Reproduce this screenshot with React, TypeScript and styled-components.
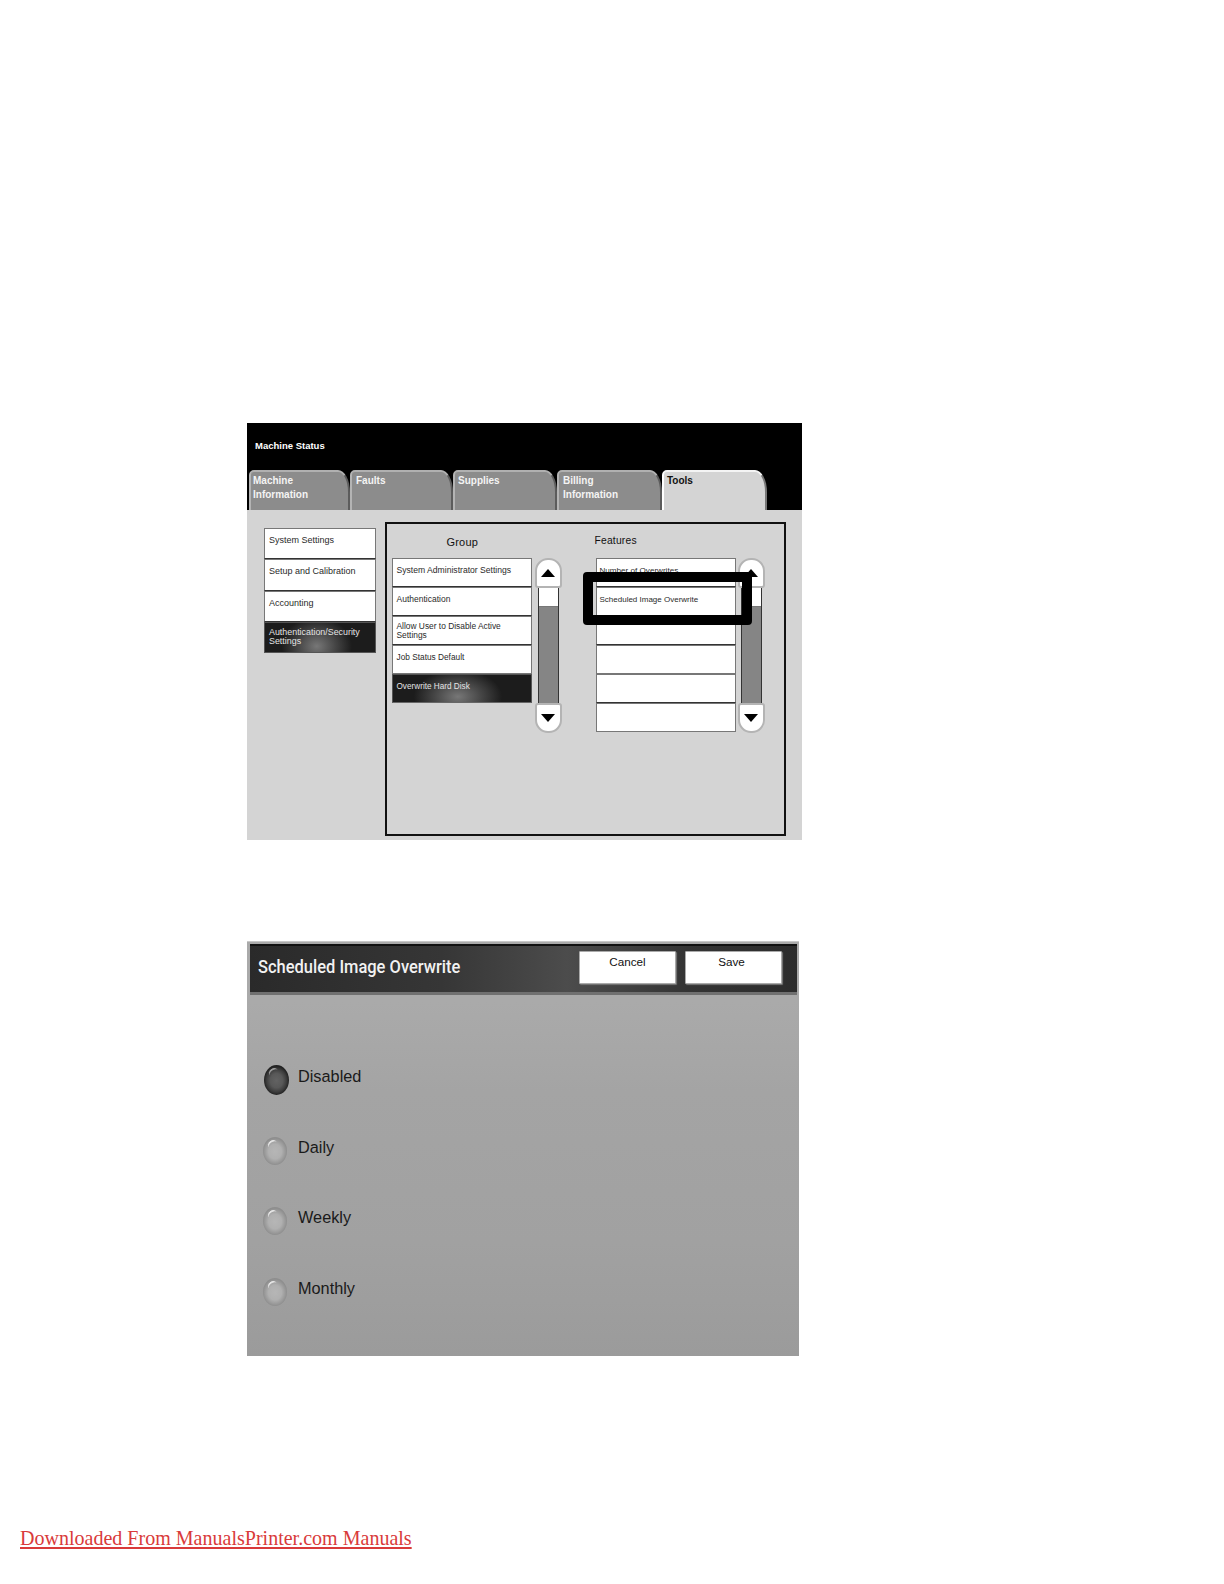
import React from 'react';
import styled, { createGlobalStyle } from 'styled-components';

const GlobalStyle = createGlobalStyle`
  html, body { margin: 0; padding: 0; background: #fff; }
  body { font-family: "Liberation Sans", Arial, sans-serif; }
`;

const Page = styled.div`
  width: 1224px;
  height: 1584px;
  box-sizing: border-box;
  padding: 423px 0 0 247px;
  display: flex;
  flex-direction: column;
  overflow: hidden;
`;

const StatusScreen = styled.section`
  width: 555px;
  height: 417px;
  background: #d4d4d4;
  display: flex;
  flex-direction: column;
`;

const BlackHeader = styled.header`
  height: 87px;
  box-sizing: border-box;
  background: #000;
  padding: 0 0 0 2px;
  display: flex;
  flex-direction: column;
  justify-content: space-between;
`;

const ScreenTitle = styled.h1`
  margin: 17px 0 0 6px;
  font-size: 9.5px;
  line-height: 12px;
  font-weight: 700;
  color: #fff;
`;

const TabRow = styled.nav`
  display: flex;
  align-items: flex-end;
`;

const Tab = styled.div<{ $active?: boolean; $w: number; $pad: number }>`
  width: ${p => p.$w}px;
  height: 40px;
  box-sizing: border-box;
  padding: 2px 0 0 ${p => p.$pad}px;
  background: ${p => (p.$active ? '#d4d4d4' : '#8c8c8c')};
  border-top: 2px solid ${p => (p.$active ? '#f4f4f4' : '#b0b0b0')};
  border-right: 2px solid ${p => (p.$active ? '#777' : '#5c5c5c')};
  border-left: 2px solid ${p => (p.$active ? '#fff' : '#b4b4b4')};
  border-radius: 5px 12px 0 0 / 5px 22px 0 0;
  color: ${p => (p.$active ? '#111' : '#f4f4f4')};
  font-size: 10px;
  line-height: 14px;
  font-weight: 700;
`;

const Body = styled.div`
  flex: 1;
  box-sizing: border-box;
  padding: 12px 16px 4px 17px;
  display: flex;
  gap: 9px;
  align-items: flex-start;
`;

const SideNav = styled.div`
  margin-top: 6px;
  width: 112px;
  display: flex;
  flex-direction: column;
`;

const ListItem = styled.div<{ $selected?: boolean; $h: number; $size: number; $wrapped?: boolean; $edge?: string; $inset?: number }>`
  height: ${p => p.$h}px;
  box-sizing: border-box;
  padding: ${p => (p.$wrapped ? '5.5px' : '6px')} 4px 0 ${p => p.$inset ?? 4}px;
  border: 1px solid ${p => (p.$selected ? '#555' : '#777')};
  border-bottom: 1.5px solid ${p => p.$edge || '#333'};
  background: ${p =>
    p.$selected
      ? 'radial-gradient(ellipse 32% 100% at 47% 80%, #777 0%, #444 55%, #1c1c1c 100%)'
      : '#fff'};
  color: ${p => (p.$selected ? '#e4e4e4' : '#2a2a2a')};
  font-size: ${p => p.$size}px;
  line-height: ${p => (p.$wrapped ? '9px' : '11px')};
`;

const MainPanel = styled.div`
  position: relative;
  width: 401px;
  height: 314px;
  box-sizing: border-box;
  border: 2.5px solid #111;
  padding: 10.5px 0 0 4.5px;
  display: flex;
  flex-direction: column;
`;

const Columns = styled.div`
  display: flex;
  align-items: flex-start;
`;

const ColumnHead = styled.div<{ $w: number; $indent: number; $size: number; $lift?: boolean }>`
  width: ${p => p.$w}px;
  height: 23px;
  box-sizing: border-box;
  margin-top: ${p => (p.$lift ? '-1px' : '0')};
  padding-left: ${p => p.$indent}px;
  font-size: ${p => p.$size}px;
  line-height: 14px;
  color: #111;
  letter-spacing: 0.2px;
`;

const ListWithScroll = styled.div<{ $w: number; $gap: number }>`
  width: ${p => p.$w}px;
  display: flex;
  gap: ${p => p.$gap}px;
  align-items: flex-start;
`;

const List = styled.div`
  width: 140px;
  flex: none;
  display: flex;
  flex-direction: column;
`;

const Scroller = styled.div`
  width: 27px;
  height: 175px;
  flex: none;
  display: flex;
  flex-direction: column;
  align-items: center;
`;

const ArrowButton = styled.div<{ $down?: boolean }>`
  width: 27px;
  height: 30px;
  flex: none;
  box-sizing: border-box;
  background: #fff;
  border: 2px solid #b4b4b4;
  border-radius: ${p => (p.$down ? '3px 3px 13px 13px' : '13px 13px 3px 3px')};
  display: flex;
  align-items: center;
  justify-content: center;
  svg { display: block; }
`;

const Track = styled.div`
  flex: 1;
  width: 21px;
  box-sizing: border-box;
  background: #858585;
  border: 1px solid #333;
  border-top: 0;
  border-bottom: 0;
`;

const Thumb = styled.div`
  height: 19px;
  background: #fff;
  border-bottom: 1px solid #777;
  box-sizing: border-box;
`;

const Callout = styled.div`
  position: absolute;
  left: 196px;
  top: 48px;
  width: 169px;
  height: 53px;
  box-sizing: border-box;
  border: 10.5px solid #000;
  border-radius: 4px;
`;

const TouchScreen = styled.section`
  margin-top: 101px;
  width: 552px;
  height: 415px;
  box-sizing: border-box;
  padding-top: 2px;
  border-top: 1px solid #c8c8c8;
  background: linear-gradient(180deg, #aaaaaa 60px, #a4a4a4 150px, #a1a1a1 300px, #9b9b9b 100%);
  display: flex;
  flex-direction: column;
`;

const DialogHeader = styled.header`
  height: 51px;
  flex: none;
  box-sizing: border-box;
  margin: 0 2px 0 3px;
  padding: 5px 15px 0 8px;
  background: linear-gradient(90deg, #2a2a2a 0%, #363636 35%, #4c4c4c 58%, #343434 80%, #2c2c2c 100%);
  border-top: 2px solid #111;
  border-bottom: 3px solid #707070;
  display: flex;
  gap: 9px;
  align-items: flex-start;
`;

const DialogTitle = styled.h2`
  margin: 4px auto 0 0;
  font-family: Roboto, "Liberation Sans", sans-serif;
  font-size: 19px;
  line-height: 24px;
  font-weight: 500;
  color: #f2f2f2;
  width: 203px;
  white-space: nowrap;
  transform: scaleX(0.867);
  transform-origin: left center;
`;

const HeaderButton = styled.button<{ $shift?: number }>`
  width: 97px;
  height: 33px;
  box-sizing: border-box;
  padding: 3px ${p => p.$shift ?? 0}px 0 0;
  background: #fff;
  border: 1px solid #aaa;
  border-radius: 1px;
  box-shadow: 1px 1px 1px #777;
  color: #111;
  font-family: inherit;
  font-size: 11.7px;
  line-height: 14px;
  display: flex;
  justify-content: center;
  align-items: flex-start;
`;

const RadioGroup = styled.div`
  padding: 70px 0 0 17px;
  display: flex;
  flex-direction: column;
`;

const RadioRow = styled.label`
  height: 70.5px;
  display: grid;
  grid-template-columns: 25px auto;
  column-gap: 9px;
  align-items: start;
  justify-content: start;
`;

const RadioDot = styled.span<{ $on?: boolean }>`
  position: relative;
  display: block;
  width: ${p => (p.$on ? 25 : 24)}px;
  height: ${p => (p.$on ? 30 : 28)}px;
  margin: ${p => (p.$on ? '0' : '1px 0 0 -1px')};
  border-radius: 50%;
  background: ${p =>
    p.$on
      ? 'radial-gradient(ellipse closest-side at 50% 52%, #626262 0%, #585858 50%, #3c3c3c 80%, #222 100%)'
      : 'radial-gradient(ellipse closest-side at 50% 52%, #b6b6b6 0%, #b0b0b0 55%, #9c9c9c 82%, #8e8e8e 100%)'};
  &::after {
    content: '';
    position: absolute;
    left: 5px;
    top: 3px;
    width: 10px;
    height: 8px;
    border-top: 2px solid ${p => (p.$on ? '#9a9a9a' : '#e4e4e4')};
    border-radius: 50% 50% 0 0;
    transform: rotate(-35deg);
  }
`;

const RadioLabel = styled.span`
  margin-top: 1px;
  font-size: 16.3px;
  line-height: 20px;
  color: #1a1a1a;
`;

const FooterLink = styled.a`
  align-self: flex-start;
  margin: 170px 0 0 -227px;
  font-family: "Liberation Serif", "Times New Roman", serif;
  font-size: 20.05px;
  line-height: 24px;
  color: #d93a3a;
  text-decoration: underline;
  white-space: nowrap;
`;

const Arrow = ({ down }: { down?: boolean }) => (
  <svg width="14" height="8" viewBox="0 0 14 8">
    <path d={down ? 'M0 0H14L7 8Z' : 'M7 0L14 8H0Z'} fill="#000" />
  </svg>
);

const ScrollBar = () => (
  <Scroller>
    <ArrowButton><Arrow /></ArrowButton>
    <Track><Thumb /></Track>
    <ArrowButton $down><Arrow down /></ArrowButton>
  </Scroller>
);

const tabs = [
  { label: ['Machine', 'Information'], w: 101, pad: 2 },
  { label: ['Faults'], w: 103, pad: 4 },
  { label: ['Supplies'], w: 104, pad: 3 },
  { label: ['Billing', 'Information'], w: 105, pad: 4 },
  { label: ['Tools'], w: 105, pad: 3, active: true },
];

const sideItems = ['System Settings', 'Setup and Calibration', 'Accounting'];

export default function App() {
  return (
    <Page>
      <GlobalStyle />
      <StatusScreen>
        <BlackHeader>
          <ScreenTitle>Machine Status</ScreenTitle>
          <TabRow>
            {tabs.map(t => (
              <Tab key={t.label[0]} $w={t.w} $pad={t.pad} $active={t.active}>
                {t.label.map(l => <div key={l}>{l}</div>)}
              </Tab>
            ))}
          </TabRow>
        </BlackHeader>
        <Body>
          <SideNav>
            {sideItems.map(s => <ListItem key={s} $h={31.25} $size={9}>{s}</ListItem>)}
            <ListItem $h={31.25} $size={8.9} $selected $wrapped $edge="#555">Authentication/Security<br />Settings</ListItem>
          </SideNav>
          <MainPanel>
            <Columns>
              <ColumnHead $w={203} $indent={55} $size={11}>Group</ColumnHead>
              <ColumnHead $w={170} $indent={0} $size={10.3} $lift>Features</ColumnHead>
            </Columns>
            <Columns>
              <ListWithScroll $w={204} $gap={3}>
                <List>
                  <ListItem $h={29.2} $size={8.6}>System Administrator Settings</ListItem>
                  <ListItem $h={29.2} $size={8.5}>Authentication</ListItem>
                  <ListItem $h={29.2} $size={8.4} $wrapped>Allow User to Disable Active<br />Settings</ListItem>
                  <ListItem $h={29.2} $size={8.3} $edge="#777">Job Status Default</ListItem>
                  <ListItem $h={29.2} $size={8.2} $selected $edge="#666">Overwrite Hard Disk</ListItem>
                </List>
                <ScrollBar />
              </ListWithScroll>
              <ListWithScroll $w={170} $gap={2}>
                <List>
                  <ListItem $h={29.2} $size={8.1} $inset={3}>Number of Overwrites</ListItem>
                  <ListItem $h={29.2} $size={8} $inset={3} $edge="#777">Scheduled Image Overwrite</ListItem>
                  <ListItem $h={29.2} $size={8} />
                  <ListItem $h={29.2} $size={8} $edge="#777" />
                  <ListItem $h={29.2} $size={8} />
                  <ListItem $h={29} $size={8} $edge="#777" />
                </List>
                <ScrollBar />
              </ListWithScroll>
            </Columns>
            <Callout />
          </MainPanel>
        </Body>
      </StatusScreen>

      <TouchScreen>
        <DialogHeader>
          <DialogTitle>Scheduled Image Overwrite</DialogTitle>
          <HeaderButton>Cancel</HeaderButton>
          <HeaderButton $shift={4}>Save</HeaderButton>
        </DialogHeader>
        <RadioGroup>
          <RadioRow><RadioDot $on /><RadioLabel>Disabled</RadioLabel></RadioRow>
          <RadioRow><RadioDot /><RadioLabel>Daily</RadioLabel></RadioRow>
          <RadioRow><RadioDot /><RadioLabel>Weekly</RadioLabel></RadioRow>
          <RadioRow><RadioDot /><RadioLabel>Monthly</RadioLabel></RadioRow>
        </RadioGroup>
      </TouchScreen>

      <FooterLink href="#">Downloaded From ManualsPrinter.com Manuals</FooterLink>
    </Page>
  );
}
